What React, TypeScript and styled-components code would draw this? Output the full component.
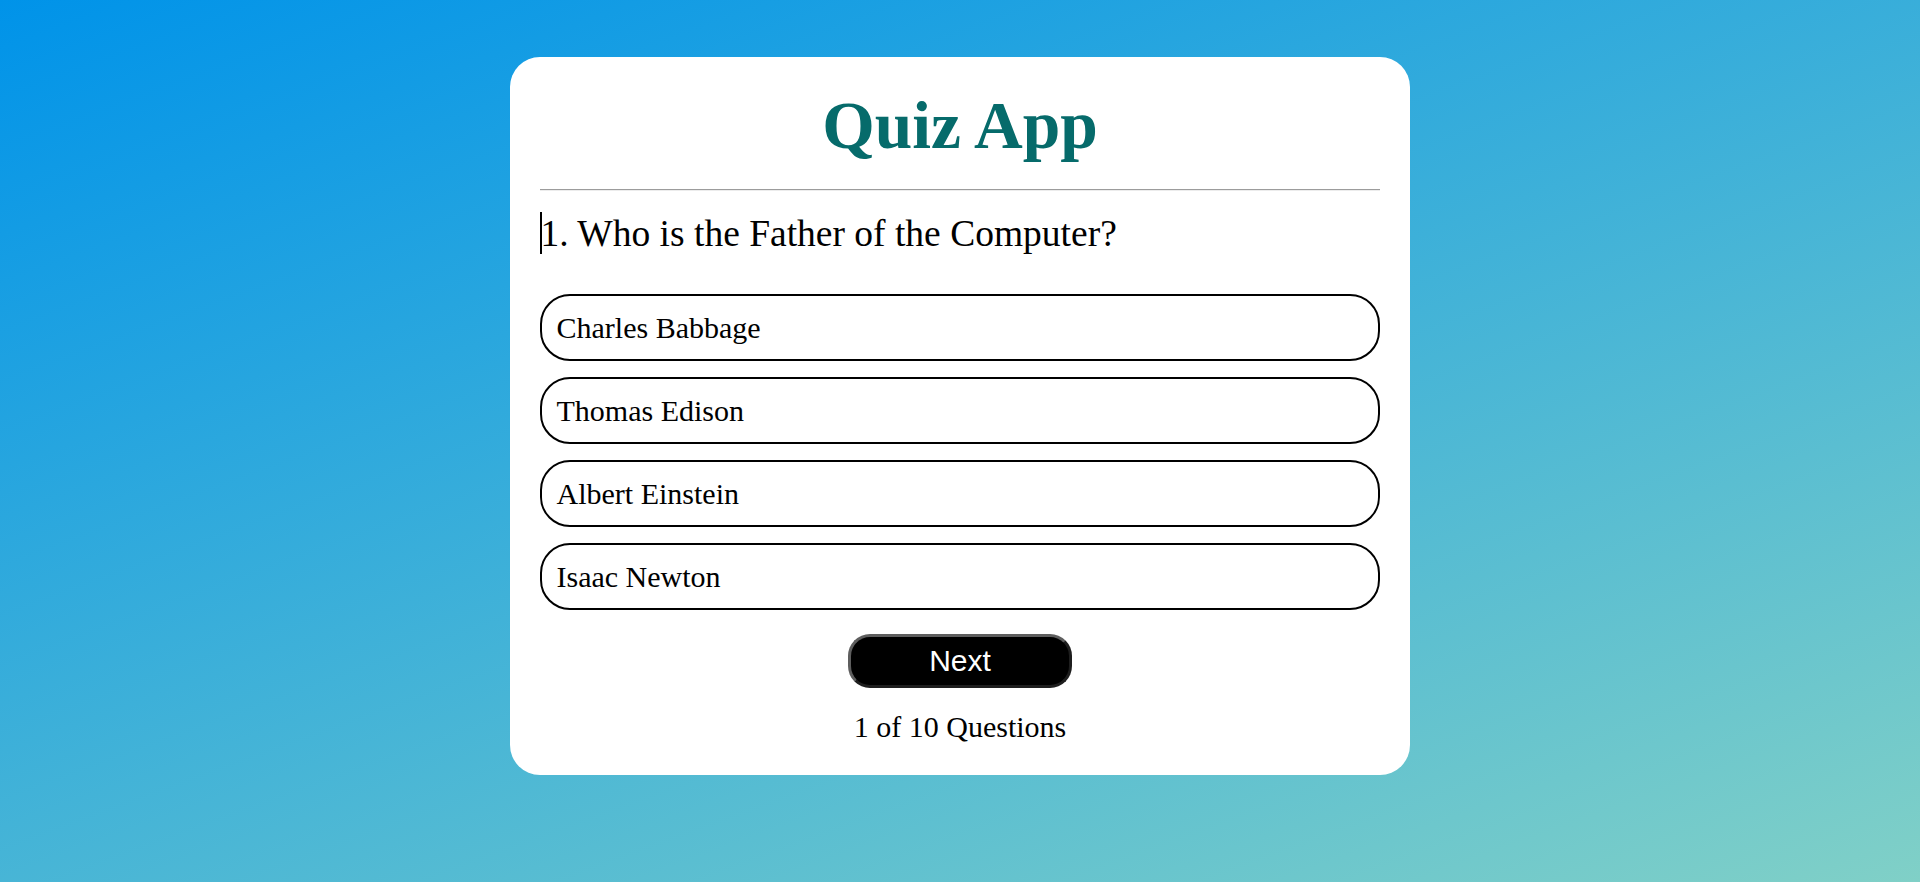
import React from "react";
import styled, { createGlobalStyle } from "styled-components";

const GlobalStyle = createGlobalStyle`
  html, body {
    margin: 0;
    padding: 0;
  }
  body {
    min-height: 100vh;
    background-color: #0093e9;
    background-image: linear-gradient(160deg, #0093e9 0%, #80d0c7 100%);
    font-family: "Liberation Serif", "Times New Roman", serif;
  }
`;

const Page = styled.div`
  min-height: 882px;
  display: flex;
  justify-content: center;
  align-items: flex-start;
  padding-top: 57px;
  box-sizing: border-box;
`;

const Card = styled.div`
  width: 900px;
  box-sizing: border-box;
  background: #ffffff;
  border-radius: 30px;
  padding: 29.5px 30px 30px;
  display: flex;
  flex-direction: column;
`;

const Title = styled.h1`
  margin: 0;
  font-family: "Liberation Serif", "Times New Roman", serif;
  font-weight: 700;
  font-size: 67.5px;
  line-height: 77.6px;
  color: #066b6b;
  text-align: center;
`;

const Divider = styled.hr`
  margin: 24.6px 0 0;
  height: 0;
  border: none;
  border-top: 1px solid #9c9c9c;
  border-bottom: 1px solid #ececec;
`;

const Question = styled.h2`
  margin: 21.5px 0 0;
  font-family: "Liberation Serif", "Times New Roman", serif;
  font-weight: 400;
  font-size: 37.5px;
  line-height: 43.1px;
  color: #000;
`;

const Caret = styled.span`
  display: inline-block;
  width: 1.5px;
  height: 42px;
  background: #000;
  vertical-align: top;
  margin-right: -1px;
`;

const OptionList = styled.ul`
  list-style: none;
  margin: 38.7px 0 0;
  padding: 0;
  display: flex;
  flex-direction: column;
  gap: 15.9px;
`;

const Option = styled.li`
  border: 2px solid #000;
  border-radius: 30px;
  padding: 15px 14.5px 13.5px;
  font-size: 30px;
  line-height: 34.5px;
  color: #000;
  cursor: pointer;
`;

const NextButton = styled.button`
  display: block;
  margin: 24px auto 0;
  width: 224px;
  height: 54.5px;
  padding: 0;
  background: #000;
  color: #fff;
  font-family: "Liberation Sans", Arial, sans-serif;
  font-size: 30px;
  line-height: 34.5px;
  border-width: 3px;
  border-style: solid;
  border-color: #5e5e5e #1e1e1e #1e1e1e #5e5e5e;
  border-radius: 22px;
  cursor: pointer;
`;

const Counter = styled.div`
  margin-top: 22.2px;
  text-align: center;
  font-size: 30px;
  line-height: 34.5px;
  color: #000;
`;

const options = ["Charles Babbage", "Thomas Edison", "Albert Einstein", "Isaac Newton"];

export default function App() {
  return (
    <>
      <GlobalStyle />
      <Page>
        <Card>
          <Title>Quiz App</Title>
          <Divider />
          <Question>
            <Caret />
            1. Who is the Father of the Computer?
          </Question>
          <OptionList>
            {options.map((o) => (
              <Option key={o}>{o}</Option>
            ))}
          </OptionList>
          <NextButton>Next</NextButton>
          <Counter>1 of 10 Questions</Counter>
        </Card>
      </Page>
    </>
  );
}
